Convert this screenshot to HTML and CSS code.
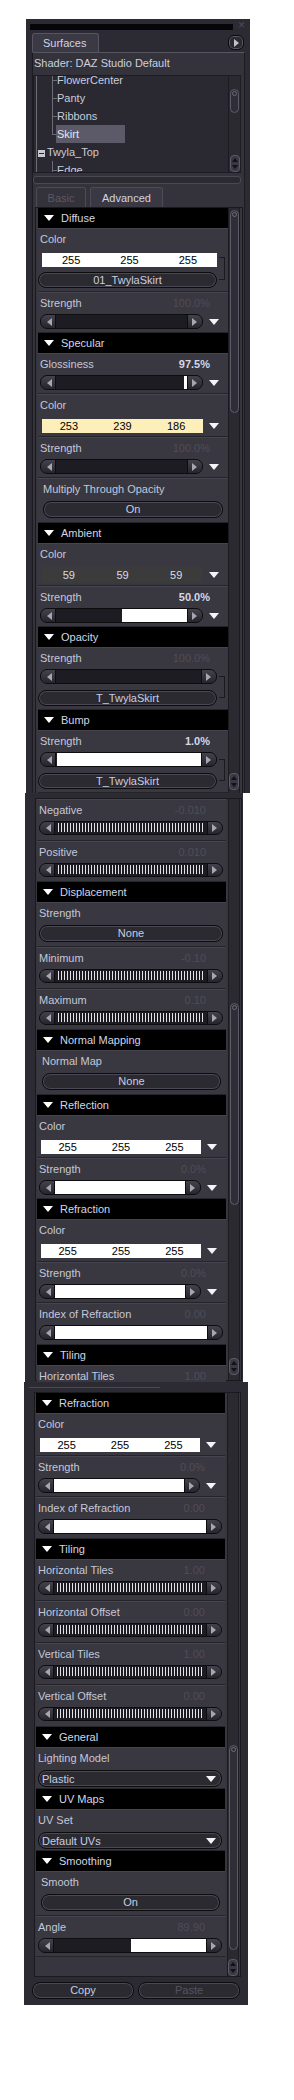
FILE: index.html
```html
<!DOCTYPE html>
<html lang="en">

<head>
    <meta charset="UTF-8">
    <meta name="viewport" content="width=device-width, initial-scale=1.0">
    <title>Surfaces</title>
    <link rel="stylesheet" href="styles.css">
</head>

<body>
    <!-- painel 1: topo do editor de superficies -->
    <div class="pane pane-top">
        <div class="titlebar"><div class="grip"></div><span class="close">×</span></div>
        <div class="tabbar">
            <div class="tab">Surfaces</div>
            <div class="menu-btn"></div>
        </div>
        <div class="surfaces">
            <div class="shader">Shader: DAZ Studio Default</div>
            <div class="tree-box">
                <ul class="tree">
                    <li class="leaf">FlowerCenter</li>
                    <li class="leaf">Panty</li>
                    <li class="leaf">Ribbons</li>
                    <li class="leaf last sel"><span>Skirt</span></li>
                    <li class="node"><i class="minus"></i>Twyla_Top</li>
                    <li class="leaf">Edge</li>
                </ul>
                <div class="vscroll tscroll">
                    <div class="thumb small"></div>
                    <div class="arrows"></div>
                </div>
            </div>
            <div class="hscroll"></div>
            <div class="subtabs">
                <div class="subtab off">Basic</div>
                <div class="subtab on">Advanced</div>
            </div>
            <div class="props">
                <div class="plist">
                    <div class="sec"><i class="tri"></i>Diffuse</div>
                    <div class="row diffuse">
                        <div class="lbl">Color</div>
                        <div class="linked">
                            <div class="grp">
                                <div class="ctl rgb-line"><div class="rgb"><span>255</span><span>255</span><span>255</span></div></div>
                                <div class="btn map">01_TwylaSkirt</div>
                            </div>
                            <i class="bracket"></i>
                        </div>
                    </div>
                    <div class="row">
                        <div class="lbl">Strength<span class="val">100.0%</span></div>
                        <div class="ctl">
                            <div class="slider"><i class="cap l"></i><span class="track"><span class="fill" style="width:100%"></span></span><i class="cap r"></i></div>
                            <i class="drop"></i>
                        </div>
                    </div>
                    <div class="sec"><i class="tri"></i>Specular</div>
                    <div class="row">
                        <div class="lbl">Glossiness<span class="val on">97.5%</span></div>
                        <div class="ctl">
                            <div class="slider"><i class="cap l"></i><span class="track"><span class="fill" style="width:97.5%"></span></span><i class="cap r"></i></div>
                            <i class="drop"></i>
                        </div>
                    </div>
                    <div class="row color">
                        <div class="lbl">Color</div>
                        <div class="ctl rgb-line">
                            <div class="rgb cream"><span>253</span><span>239</span><span>186</span></div>
                            <i class="drop"></i>
                        </div>
                    </div>
                    <div class="row">
                        <div class="lbl">Strength<span class="val">100.0%</span></div>
                        <div class="ctl">
                            <div class="slider"><i class="cap l"></i><span class="track"><span class="fill" style="width:100%"></span></span><i class="cap r"></i></div>
                            <i class="drop"></i>
                        </div>
                    </div>
                    <div class="row pick">
                        <div class="lbl inset">Multiply Through Opacity</div>
                        <div class="btn inset">On</div>
                    </div>
                    <div class="sec"><i class="tri"></i>Ambient</div>
                    <div class="row color">
                        <div class="lbl">Color</div>
                        <div class="ctl rgb-line tall">
                            <div class="rgb dark"><span>59</span><span>59</span><span>59</span></div>
                            <i class="drop"></i>
                        </div>
                    </div>
                    <div class="row">
                        <div class="lbl">Strength<span class="val on">50.0%</span></div>
                        <div class="ctl">
                            <div class="slider"><i class="cap l"></i><span class="track"><span class="fill" style="width:50%"></span></span><i class="cap r"></i></div>
                            <i class="drop"></i>
                        </div>
                    </div>
                    <div class="sec"><i class="tri"></i>Opacity</div>
                    <div class="row maprow">
                        <div class="lbl">Strength<span class="val">100.0%</span></div>
                        <div class="linked">
                            <div class="grp">
                                <div class="ctl">
                                    <div class="slider"><i class="cap l"></i><span class="track"><span class="fill" style="width:100%"></span></span><i class="cap r"></i></div>
                                </div>
                                <div class="btn map">T_TwylaSkirt</div>
                            </div>
                            <i class="bracket"></i>
                        </div>
                    </div>
                    <div class="sec"><i class="tri"></i>Bump</div>
                    <div class="row maprow">
                        <div class="lbl">Strength<span class="val on">1.0%</span></div>
                        <div class="linked">
                            <div class="grp">
                                <div class="ctl">
                                    <div class="slider"><i class="cap l"></i><span class="track"><span class="fill" style="width:1%"></span></span><i class="cap r"></i></div>
                                </div>
                                <div class="btn map">T_TwylaSkirt</div>
                            </div>
                            <i class="bracket"></i>
                        </div>
                    </div>
                </div>
                <div class="vscroll">
                    <div class="thumb at-top"></div>
                    <div class="arrows"></div>
                </div>
            </div>
        </div>
    </div>

    <!-- painel 2: meio da lista -->
    <div class="pane pane-mid">
        <div class="props">
            <div class="plist">
                <div class="row ticked">
                    <div class="lbl">Negative<span class="val">-0.010</span></div>
                    <div class="ctl tick">
                        <div class="slider"><i class="cap l"></i><span class="track ticks"></span><i class="cap r"></i></div>
                    </div>
                </div>
                <div class="row ticked">
                    <div class="lbl">Positive<span class="val">0.010</span></div>
                    <div class="ctl tick">
                        <div class="slider"><i class="cap l"></i><span class="track ticks"></span><i class="cap r"></i></div>
                    </div>
                </div>
                <div class="sec"><i class="tri"></i>Displacement</div>
                <div class="row pick">
                    <div class="lbl">Strength</div>
                    <div class="btn">None</div>
                </div>
                <div class="row ticked">
                    <div class="lbl">Minimum<span class="val">-0.10</span></div>
                    <div class="ctl tick">
                        <div class="slider"><i class="cap l"></i><span class="track ticks"></span><i class="cap r"></i></div>
                    </div>
                </div>
                <div class="row ticked">
                    <div class="lbl">Maximum<span class="val">0.10</span></div>
                    <div class="ctl tick">
                        <div class="slider"><i class="cap l"></i><span class="track ticks"></span><i class="cap r"></i></div>
                    </div>
                </div>
                <div class="sec"><i class="tri"></i>Normal Mapping</div>
                <div class="row pick">
                    <div class="lbl inset">Normal Map</div>
                    <div class="btn inset">None</div>
                </div>
                <div class="sec"><i class="tri"></i>Reflection</div>
                <div class="row color">
                    <div class="lbl">Color</div>
                    <div class="ctl rgb-line">
                        <div class="rgb"><span>255</span><span>255</span><span>255</span></div>
                        <i class="drop"></i>
                    </div>
                </div>
                <div class="row">
                    <div class="lbl">Strength<span class="val">0.0%</span></div>
                    <div class="ctl">
                        <div class="slider"><i class="cap l"></i><span class="track"><span class="fill" style="width:0%"></span></span><i class="cap r"></i></div>
                        <i class="drop"></i>
                    </div>
                </div>
                <div class="sec"><i class="tri"></i>Refraction</div>
                <div class="row color">
                    <div class="lbl">Color</div>
                    <div class="ctl rgb-line">
                        <div class="rgb"><span>255</span><span>255</span><span>255</span></div>
                        <i class="drop"></i>
                    </div>
                </div>
                <div class="row">
                    <div class="lbl">Strength<span class="val">0.0%</span></div>
                    <div class="ctl">
                        <div class="slider"><i class="cap l"></i><span class="track"><span class="fill" style="width:0%"></span></span><i class="cap r"></i></div>
                        <i class="drop"></i>
                    </div>
                </div>
                <div class="row ior">
                    <div class="lbl">Index of Refraction<span class="val">0.00</span></div>
                    <div class="ctl">
                        <div class="slider"><i class="cap l"></i><span class="track"><span class="fill" style="width:0%"></span></span><i class="cap r"></i></div>
                    </div>
                </div>
                <div class="sec"><i class="tri"></i>Tiling</div>
                <div class="row ticked">
                    <div class="lbl">Horizontal Tiles<span class="val">1.00</span></div>
                    <div class="ctl tick">
                        <div class="slider"><i class="cap l"></i><span class="track ticks"></span><i class="cap r"></i></div>
                    </div>
                </div>
            </div>
            <div class="vscroll">
                <div class="thumb at-mid"></div>
                <div class="arrows"></div>
            </div>
        </div>
    </div>

    <!-- painel 3: fim da lista -->
    <div class="pane pane-bot">
        <div class="splitter"></div>
        <div class="props">
            <div class="plist">
                <div class="sec"><i class="tri"></i>Refraction</div>
                <div class="row color">
                    <div class="lbl">Color</div>
                    <div class="ctl rgb-line">
                        <div class="rgb"><span>255</span><span>255</span><span>255</span></div>
                        <i class="drop"></i>
                    </div>
                </div>
                <div class="row">
                    <div class="lbl">Strength<span class="val">0.0%</span></div>
                    <div class="ctl">
                        <div class="slider"><i class="cap l"></i><span class="track"><span class="fill" style="width:0%"></span></span><i class="cap r"></i></div>
                        <i class="drop"></i>
                    </div>
                </div>
                <div class="row ior">
                    <div class="lbl">Index of Refraction<span class="val">0.00</span></div>
                    <div class="ctl">
                        <div class="slider"><i class="cap l"></i><span class="track"><span class="fill" style="width:0%"></span></span><i class="cap r"></i></div>
                    </div>
                </div>
                <div class="sec"><i class="tri"></i>Tiling</div>
                <div class="row ticked">
                    <div class="lbl">Horizontal Tiles<span class="val">1.00</span></div>
                    <div class="ctl tick">
                        <div class="slider"><i class="cap l"></i><span class="track ticks"></span><i class="cap r"></i></div>
                    </div>
                </div>
                <div class="row ticked">
                    <div class="lbl">Horizontal Offset<span class="val">0.00</span></div>
                    <div class="ctl tick">
                        <div class="slider"><i class="cap l"></i><span class="track ticks"></span><i class="cap r"></i></div>
                    </div>
                </div>
                <div class="row ticked">
                    <div class="lbl">Vertical Tiles<span class="val">1.00</span></div>
                    <div class="ctl tick">
                        <div class="slider"><i class="cap l"></i><span class="track ticks"></span><i class="cap r"></i></div>
                    </div>
                </div>
                <div class="row ticked">
                    <div class="lbl">Vertical Offset<span class="val">0.00</span></div>
                    <div class="ctl tick">
                        <div class="slider"><i class="cap l"></i><span class="track ticks"></span><i class="cap r"></i></div>
                    </div>
                </div>
                <div class="sec"><i class="tri"></i>General</div>
                <div class="row choice-row">
                    <div class="lbl">Lighting Model</div>
                    <div class="choice">Plastic</div>
                </div>
                <div class="sec"><i class="tri"></i>UV Maps</div>
                <div class="row choice-row">
                    <div class="lbl">UV Set</div>
                    <div class="choice">Default UVs</div>
                </div>
                <div class="sec"><i class="tri"></i>Smoothing</div>
                <div class="row pick">
                    <div class="lbl inset">Smooth</div>
                    <div class="btn inset">On</div>
                </div>
                <div class="row">
                    <div class="lbl">Angle<span class="val">89.90</span></div>
                    <div class="ctl">
                        <div class="slider"><i class="cap l"></i><span class="track"><span class="fill" style="width:50.6%"></span></span><i class="cap r"></i></div>
                    </div>
                </div>
            </div>
            <div class="vscroll">
                <div class="thumb at-end"></div>
                <div class="arrows"></div>
            </div>
        </div>
        <div class="footer">
            <div class="btn">Copy</div>
            <div class="btn off">Paste</div>
        </div>
    </div>
</body>

</html>
```

FILE: styles.css
```css
body {
    margin: 0;
    background: #fff;
    font-family: "Liberation Sans", Arial, sans-serif;
    font-size: 11px;
    color: #c4c8d9;
}

/* molduras dos tres recortes */
.pane {
    box-sizing: border-box;
    background: #2c2a32;
    overflow: hidden;
}

.pane-top {
    width: 224px;
    height: 774px;
    margin: 19px 0 0 26px;
}

.pane-mid {
    width: 218px;
    height: 589px;
    margin-left: 25px;
    padding: 5px 0 0 10px;
}

.pane-bot {
    width: 224px;
    height: 623px;
    margin-left: 24px;
    padding-left: 10px;
}

.titlebar {
    height: 14px;
    display: flex;
    align-items: flex-start;
}

.grip {
    width: 203px;
    height: 6px;
    margin: 5px 0 0 4px;
    background: #060608;
}

.close {
    margin-left: 5px;
    line-height: 13px;
    font-size: 12px;
    color: #4e4c56;
}

.tabbar {
    height: 19px;
    display: flex;
    padding-left: 6px;
}

.tab {
    width: 67px;
    box-sizing: border-box;
    border: 1px solid #57555f;
    border-bottom: 0;
    border-radius: 3px 3px 0 0;
    background: #3b3943;
    padding-left: 10px;
    line-height: 18px;
    color: #d0d4e3;
}

.menu-btn {
    width: 16px;
    height: 15px;
    margin: 2px 6px 0 auto;
    box-sizing: border-box;
    border: 1px solid #0b0b0d;
    border-radius: 6px;
    background: #2b2a31;
    box-shadow: inset 0 0 0 1px #5b5967;
    display: flex;
    align-items: center;
    justify-content: center;
}

.menu-btn::after {
    content: "";
    border-top: 4px solid transparent;
    border-bottom: 4px solid transparent;
    border-left: 5px solid #c0c0ca;
    margin-left: 1px;
}

.surfaces {
    width: 213px;
    height: 742px;
    margin-left: 6px;
    box-sizing: border-box;
    border: 1px solid #1c1b20;
    border-top-color: #57555f;
    background: #34323b;
}

.shader {
    height: 21px;
    line-height: 21px;
    padding-left: 1px;
    color: #ccd0df;
}

/* arvore de superficies */
.tree-box {
    display: flex;
    width: 208px;
    height: 98px;
    margin-top: 1px;
    box-sizing: border-box;
    border: 1px solid #1d1c22;
    background: #2a2830;
    overflow: hidden;
}

.tree {
    flex: 1;
    list-style: none;
    margin: -5px 0 0;
    padding: 0;
}

.tree li {
    height: 18px;
    line-height: 18px;
    white-space: nowrap;
    color: #c8ccdc;
}

.tree .leaf {
    padding-left: 23px;
    background:
        linear-gradient(#6c6b76, #6c6b76) 2px 0 / 1px 100% no-repeat,
        linear-gradient(#6c6b76, #6c6b76) 18px 0 / 1px 100% no-repeat,
        linear-gradient(#6c6b76, #6c6b76) 18px 9px / 5px 1px no-repeat;
}

.tree .leaf.last {
    background:
        linear-gradient(#6c6b76, #6c6b76) 2px 0 / 1px 100% no-repeat,
        linear-gradient(#6c6b76, #6c6b76) 18px 0 / 1px 10px no-repeat,
        linear-gradient(#6c6b76, #6c6b76) 18px 9px / 5px 1px no-repeat;
}

.tree .sel span {
    display: inline-block;
    width: 68px;
    margin-left: -1px;
    padding-left: 1px;
    background: #5c5a68;
    color: #e3e6f0;
}

.tree .node {
    padding-left: 4px;
    background: linear-gradient(#6c6b76, #6c6b76) 2px 0 / 1px 100% no-repeat;
}

.minus {
    display: inline-block;
    width: 7px;
    height: 7px;
    margin-right: 2px;
    vertical-align: -1px;
    background: linear-gradient(#26252b, #26252b) center / 5px 1px no-repeat, #c8c8d0;
}

.hscroll {
    width: 208px;
    height: 8px;
    margin-top: 3px;
    box-sizing: border-box;
    border: 1px solid #4a4853;
    border-radius: 3px;
    background: #2b2a31;
}

.subtabs {
    display: flex;
    gap: 4px;
    height: 20px;
    margin-top: 3px;
    padding-left: 3px;
}

.subtab {
    box-sizing: border-box;
    height: 20px;
    border: 1px solid #4d4b55;
    border-bottom: 0;
    border-radius: 3px 3px 0 0;
    text-align: center;
    line-height: 20px;
}

.subtab.off {
    width: 50px;
    color: #5b5963;
}

.subtab.on {
    width: 73px;
    background: #3a3842;
    color: #d0d4e3;
}

/* lista de propriedades */
.props {
    display: flex;
    box-sizing: border-box;
    border: 1px solid #1a191e;
    background: #37353e;
}

.pane-top .props {
    width: 208px;
    height: 588px;
    margin-left: 2px;
    padding: 0 2px;
}

.pane-mid .props,
.pane-bot .props {
    width: 207px;
    padding: 0 1px;
}

.pane-mid .props {
    height: 583px;
}

.pane-bot .props {
    height: 585px;
}

.plist {
    flex: 1;
    min-width: 0;
}

.pane-mid .plist,
.pane-bot .plist {
    margin-right: 2px;
}

.sec {
    display: flex;
    align-items: center;
    height: 20px;
    padding-left: 6px;
    background: #000;
    color: #d2d6e5;
}

.tri {
    border-left: 5px solid transparent;
    border-right: 5px solid transparent;
    border-top: 6px solid #fff;
    margin-right: 7px;
}

.row {
    box-sizing: border-box;
    height: 41px;
    padding-top: 1px;
    border-top: 1px solid #46444e;
    border-bottom: 1px solid #25242a;
    background: #393740;
}

.row.color { height: 43px; }
.row.ior { height: 42px; }
.row.ticked { height: 42px; }
.pane-mid .row.ticked { height: 41.5px; }
.row.pick { height: 45px; }
.row.choice-row { height: 42px; }
.row.diffuse { height: 64px; }
.row.maprow { height: 63px; }

.lbl {
    display: flex;
    justify-content: space-between;
    height: 18px;
    line-height: 18px;
    padding: 0 18px 0 2px;
    white-space: nowrap;
}

.pane-mid .lbl,
.pane-bot .lbl {
    padding-right: 20px;
}

.lbl.inset {
    padding-left: 5px;
}

.val {
    color: #4f4d57;
}

.val.on {
    color: #d4d8e6;
    font-weight: bold;
}

.ctl {
    display: flex;
    height: 15px;
    margin: 2px 3px 0 2px;
}

.ctl.tick {
    height: 14px;
}

.ctl.rgb-line {
    height: 14px;
    margin-top: 5px;
}

.ctl.rgb-line.tall {
    height: 16px;
    margin-top: 4px;
}

/* slider com as pontas arredondadas */
.slider {
    flex: 1;
    display: flex;
    box-sizing: border-box;
    border: 1px solid #0d0d10;
    border-radius: 7px;
    overflow: hidden;
    background: #1d1c22;
}

.cap {
    flex: none;
    width: 14px;
    display: flex;
    align-items: center;
    justify-content: center;
    background: linear-gradient(#44424c, #26252c);
}

.cap.l {
    border-right: 1px solid #0d0d10;
}

.cap.r {
    border-left: 1px solid #0d0d10;
}

.cap.l::after {
    content: "";
    border-top: 4px solid transparent;
    border-bottom: 4px solid transparent;
    border-right: 5px solid #a6a6b0;
    margin-left: 2px;
}

.cap.r::after {
    content: "";
    border-top: 4px solid transparent;
    border-bottom: 4px solid transparent;
    border-left: 5px solid #a6a6b0;
    margin-right: 2px;
}

.track {
    flex: 1;
    display: flex;
    background: #fff;
}

.fill {
    background: #1d1c22;
}

.track.ticks {
    background:
        repeating-linear-gradient(90deg, #e2e2e8 0 1px, transparent 1px 3px) 3px 1px / calc(100% - 5px) 9px no-repeat,
        #1d1c22;
}

.drop {
    flex: none;
    width: 22px;
    display: flex;
    align-items: center;
    justify-content: center;
}

.drop::after {
    content: "";
    border-left: 5px solid transparent;
    border-right: 5px solid transparent;
    border-top: 6px solid #f4f4f8;
}

.rgb {
    flex: 1;
    display: flex;
    margin-left: 2px;
    background: #fff;
    color: #000;
    line-height: 14px;
}

.rgb span {
    flex: 1;
    text-align: center;
}

.rgb.cream {
    background: rgb(253, 239, 186);
}

.rgb.dark {
    background: rgb(59, 59, 59);
    color: #dadbe2;
    line-height: 16px;
}

.linked {
    display: flex;
    margin-right: 3px;
}

.grp {
    flex: 1;
}

.grp .ctl {
    margin-right: 0;
}

.grp .rgb {
    margin-left: 2px;
}

.bracket {
    width: 5px;
    margin: 9px 0 8px 2px;
    border: 1px solid #1b1a20;
    border-left: 0;
}

.btn {
    box-sizing: border-box;
    height: 17px;
    line-height: 15px;
    margin: 3px 3px 0 2px;
    border: 1px solid #0c0c0f;
    border-radius: 8px;
    background: #2b2a31;
    box-shadow: inset 0 0 0 1px #4a4853;
    text-align: center;
    color: #c9cde0;
}

.btn.map {
    height: 16px;
    line-height: 14px;
    margin: 5px 0 0 0;
}

.maprow .btn.map {
    margin-top: 6px;
}

.btn.inset {
    margin-left: 5px;
    margin-right: 5px;
}

.btn.off {
    color: #55535d;
}

.choice {
    display: flex;
    align-items: center;
    justify-content: space-between;
    box-sizing: border-box;
    height: 17px;
    margin: 3px 3px 0 2px;
    padding: 0 5px 0 3px;
    border: 1px solid #0c0c0f;
    border-radius: 8px;
    background: #2b2a31;
    box-shadow: inset 0 0 0 1px #4a4853;
    color: #c9cde0;
}

.choice::after {
    content: "";
    border-left: 5px solid transparent;
    border-right: 5px solid transparent;
    border-top: 6px solid #f4f4f8;
}

/* barras de rolagem */
.vscroll {
    flex: none;
    width: 12px;
    display: flex;
    flex-direction: column;
    align-items: center;
    box-sizing: border-box;
    border-left: 1px solid #1c1b21;
    border-right: 1px solid #1c1b21;
    background: #2b2a31;
}

.thumb {
    width: 9px;
    box-sizing: border-box;
    border: 1px solid #5d5b68;
    border-radius: 5px;
    background: #2f2e36;
}

.thumb::before {
    content: "";
    display: block;
    width: 5px;
    height: 5px;
    margin: 1px auto;
    box-sizing: border-box;
    border: 1px solid #6d6b78;
    border-radius: 50%;
}

.thumb.small { margin-top: 13px; height: 24px; }
.thumb.at-top { margin-top: 2px; height: 203px; }
.thumb.at-mid { margin-top: 204px; height: 202px; }
.thumb.at-end { margin-top: 352px; height: 205px; }

.arrows {
    width: 10px;
    height: 17px;
    margin-top: auto;
    box-sizing: border-box;
    border: 1px solid #5d5b68;
    border-radius: 4px;
    background: #3a3842;
    display: flex;
    flex-direction: column;
    align-items: center;
    justify-content: space-around;
}

.arrows::before {
    content: "";
    border-left: 3px solid transparent;
    border-right: 3px solid transparent;
    border-bottom: 4px solid #121116;
}

.arrows::after {
    content: "";
    border-left: 3px solid transparent;
    border-right: 3px solid transparent;
    border-top: 4px solid #121116;
}

.pane-top .props .arrows { margin-bottom: 4px; }
.pane-mid .arrows { margin-bottom: 5px; }

.tscroll {
    border-right: 0;
}

.splitter {
    height: 10px;
    margin-left: -5px;
    background: linear-gradient(#4a4853, #4a4853) 0 5px / 131px 1px no-repeat;
}

.footer {
    display: flex;
    gap: 4px;
    margin: 5px 0 0 -2px;
}

.footer .btn {
    width: 102px;
    margin: 0;
}
```
